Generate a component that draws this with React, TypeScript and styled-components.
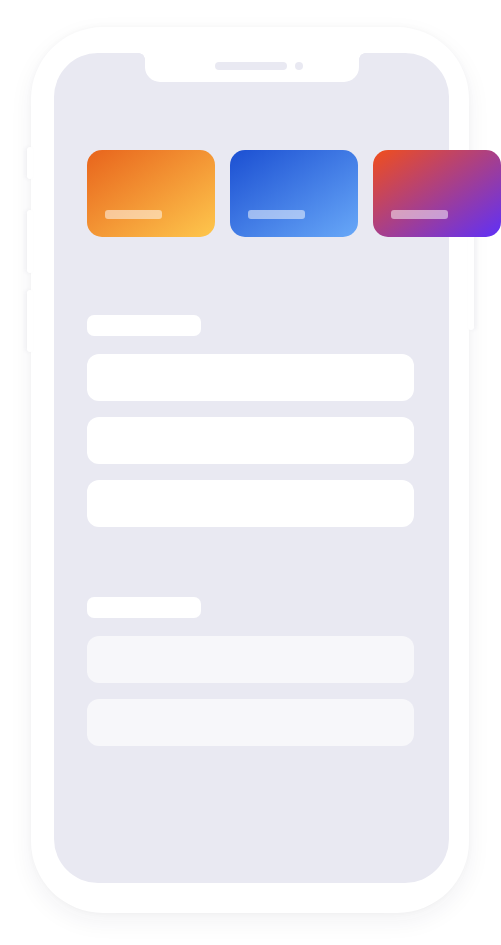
import React from "react";
import styled, { createGlobalStyle } from "styled-components";

const Global = createGlobalStyle`
  html, body { margin: 0; padding: 0; background: #ffffff; overflow: hidden; }
  body { font-family: "Liberation Sans", Arial, sans-serif; }
`;

const Page = styled.div`
  width: 501px;
  height: 945px;
  padding: 27px 0 0 31px;
  box-sizing: border-box;
`;

const Phone = styled.div`
  position: relative;
  width: 438px;
  height: 886px;
  box-sizing: border-box;
  padding: 26px 20px 30px 23px;
  display: flex;
  flex-direction: column;
  background: #ffffff;
  border-radius: 72px;
  box-shadow: 0 8px 24px rgba(40, 40, 70, 0.06), 0 0 6px rgba(40, 40, 70, 0.03);
`;

const SideButton = styled.div<{ $side: "left" | "right"; $top: number; $h: number }>`
  position: absolute;
  top: ${(p) => p.$top}px;
  ${(p) => (p.$side === "left" ? "left: -4px;" : "right: -5px;")}
  width: 6px;
  height: ${(p) => p.$h}px;
  background: #ffffff;
  border-radius: 3px;
  box-shadow: ${(p) => (p.$side === "left" ? "-2px 0 4px" : "2px 0 4px")} rgba(40, 40, 70, 0.05);
  z-index: 0;
`;

const Screen = styled.div`
  position: relative;
  z-index: 1;
  flex: 1;
  background: #e9e9f2;
  border-radius: 44px;
  display: flex;
  flex-direction: column;
  padding: 97px 0 0 33px;
  box-sizing: border-box;
`;

const Notch = styled.div`
  position: absolute;
  top: 0;
  left: 91px;
  width: 214px;
  height: 29px;
  background: #ffffff;
  border-radius: 0 0 15px 15px;
  display: flex;
  align-items: center;
  justify-content: center;
  gap: 8px;
  padding-bottom: 4px;
  box-sizing: border-box;

  &::before,
  &::after {
    content: "";
    position: absolute;
    top: 0;
    width: 6px;
    height: 6px;
  }
  &::before {
    left: -6px;
    background: radial-gradient(circle at 0 100%, transparent 5.5px, #ffffff 6px);
  }
  &::after {
    right: -6px;
    background: radial-gradient(circle at 100% 100%, transparent 5.5px, #ffffff 6px);
  }
`;

const Speaker = styled.div`
  width: 72px;
  height: 8px;
  border-radius: 4px;
  background: #e9e9f2;
  margin-left: 14px;
`;

const Camera = styled.div`
  width: 8px;
  height: 8px;
  border-radius: 50%;
  background: #e9e9f2;
`;

const CardRow = styled.div`
  display: flex;
  gap: 15px;
`;

const Card = styled.div<{ $from: string; $to: string }>`
  position: relative;
  flex: 0 0 128px;
  height: 87px;
  border-radius: 15px;
  background: linear-gradient(to bottom right, ${(p) => p.$from}, ${(p) => p.$to});
  padding: 60px 0 0 18px;
  box-sizing: border-box;
`;

const CardBar = styled.div`
  width: 57px;
  height: 9px;
  border-radius: 3px;
  background: rgba(255, 255, 255, 0.5);
`;

const Section = styled.div<{ $top: number }>`
  display: flex;
  flex-direction: column;
  gap: 16px;
  margin-top: ${(p) => p.$top}px;
  width: 327px;
`;

const Label = styled.div`
  width: 114px;
  height: 21px;
  border-radius: 7px;
  background: #ffffff;
  margin-bottom: 2px;
`;

const Row = styled.div<{ $muted?: boolean }>`
  height: 47px;
  border-radius: 12px;
  background: ${(p) => (p.$muted ? "#f7f7fa" : "#ffffff")};
`;

const cards = [
  { from: "#e8641c", to: "#fec74d" },
  { from: "#1b4fd2", to: "#68a8f8" },
  { from: "#f14e1b", to: "#5f30f8" },
];

export default function App() {
  return (
    <>
      <Global />
      <Page>
        <Phone>
          <SideButton $side="left" $top={120} $h={32} />
          <SideButton $side="left" $top={183} $h={63} />
          <SideButton $side="left" $top={263} $h={62} />
          <SideButton $side="right" $top={208} $h={95} />
          <Screen>
            <Notch>
              <Speaker />
              <Camera />
            </Notch>
            <CardRow>
              {cards.map((c, i) => (
                <Card key={i} $from={c.from} $to={c.to}>
                  <CardBar />
                </Card>
              ))}
            </CardRow>
            <Section $top={78}>
              <Label />
              <Row />
              <Row />
              <Row />
            </Section>
            <Section $top={70}>
              <Label />
              <Row $muted />
              <Row $muted />
            </Section>
          </Screen>
        </Phone>
      </Page>
    </>
  );
}
